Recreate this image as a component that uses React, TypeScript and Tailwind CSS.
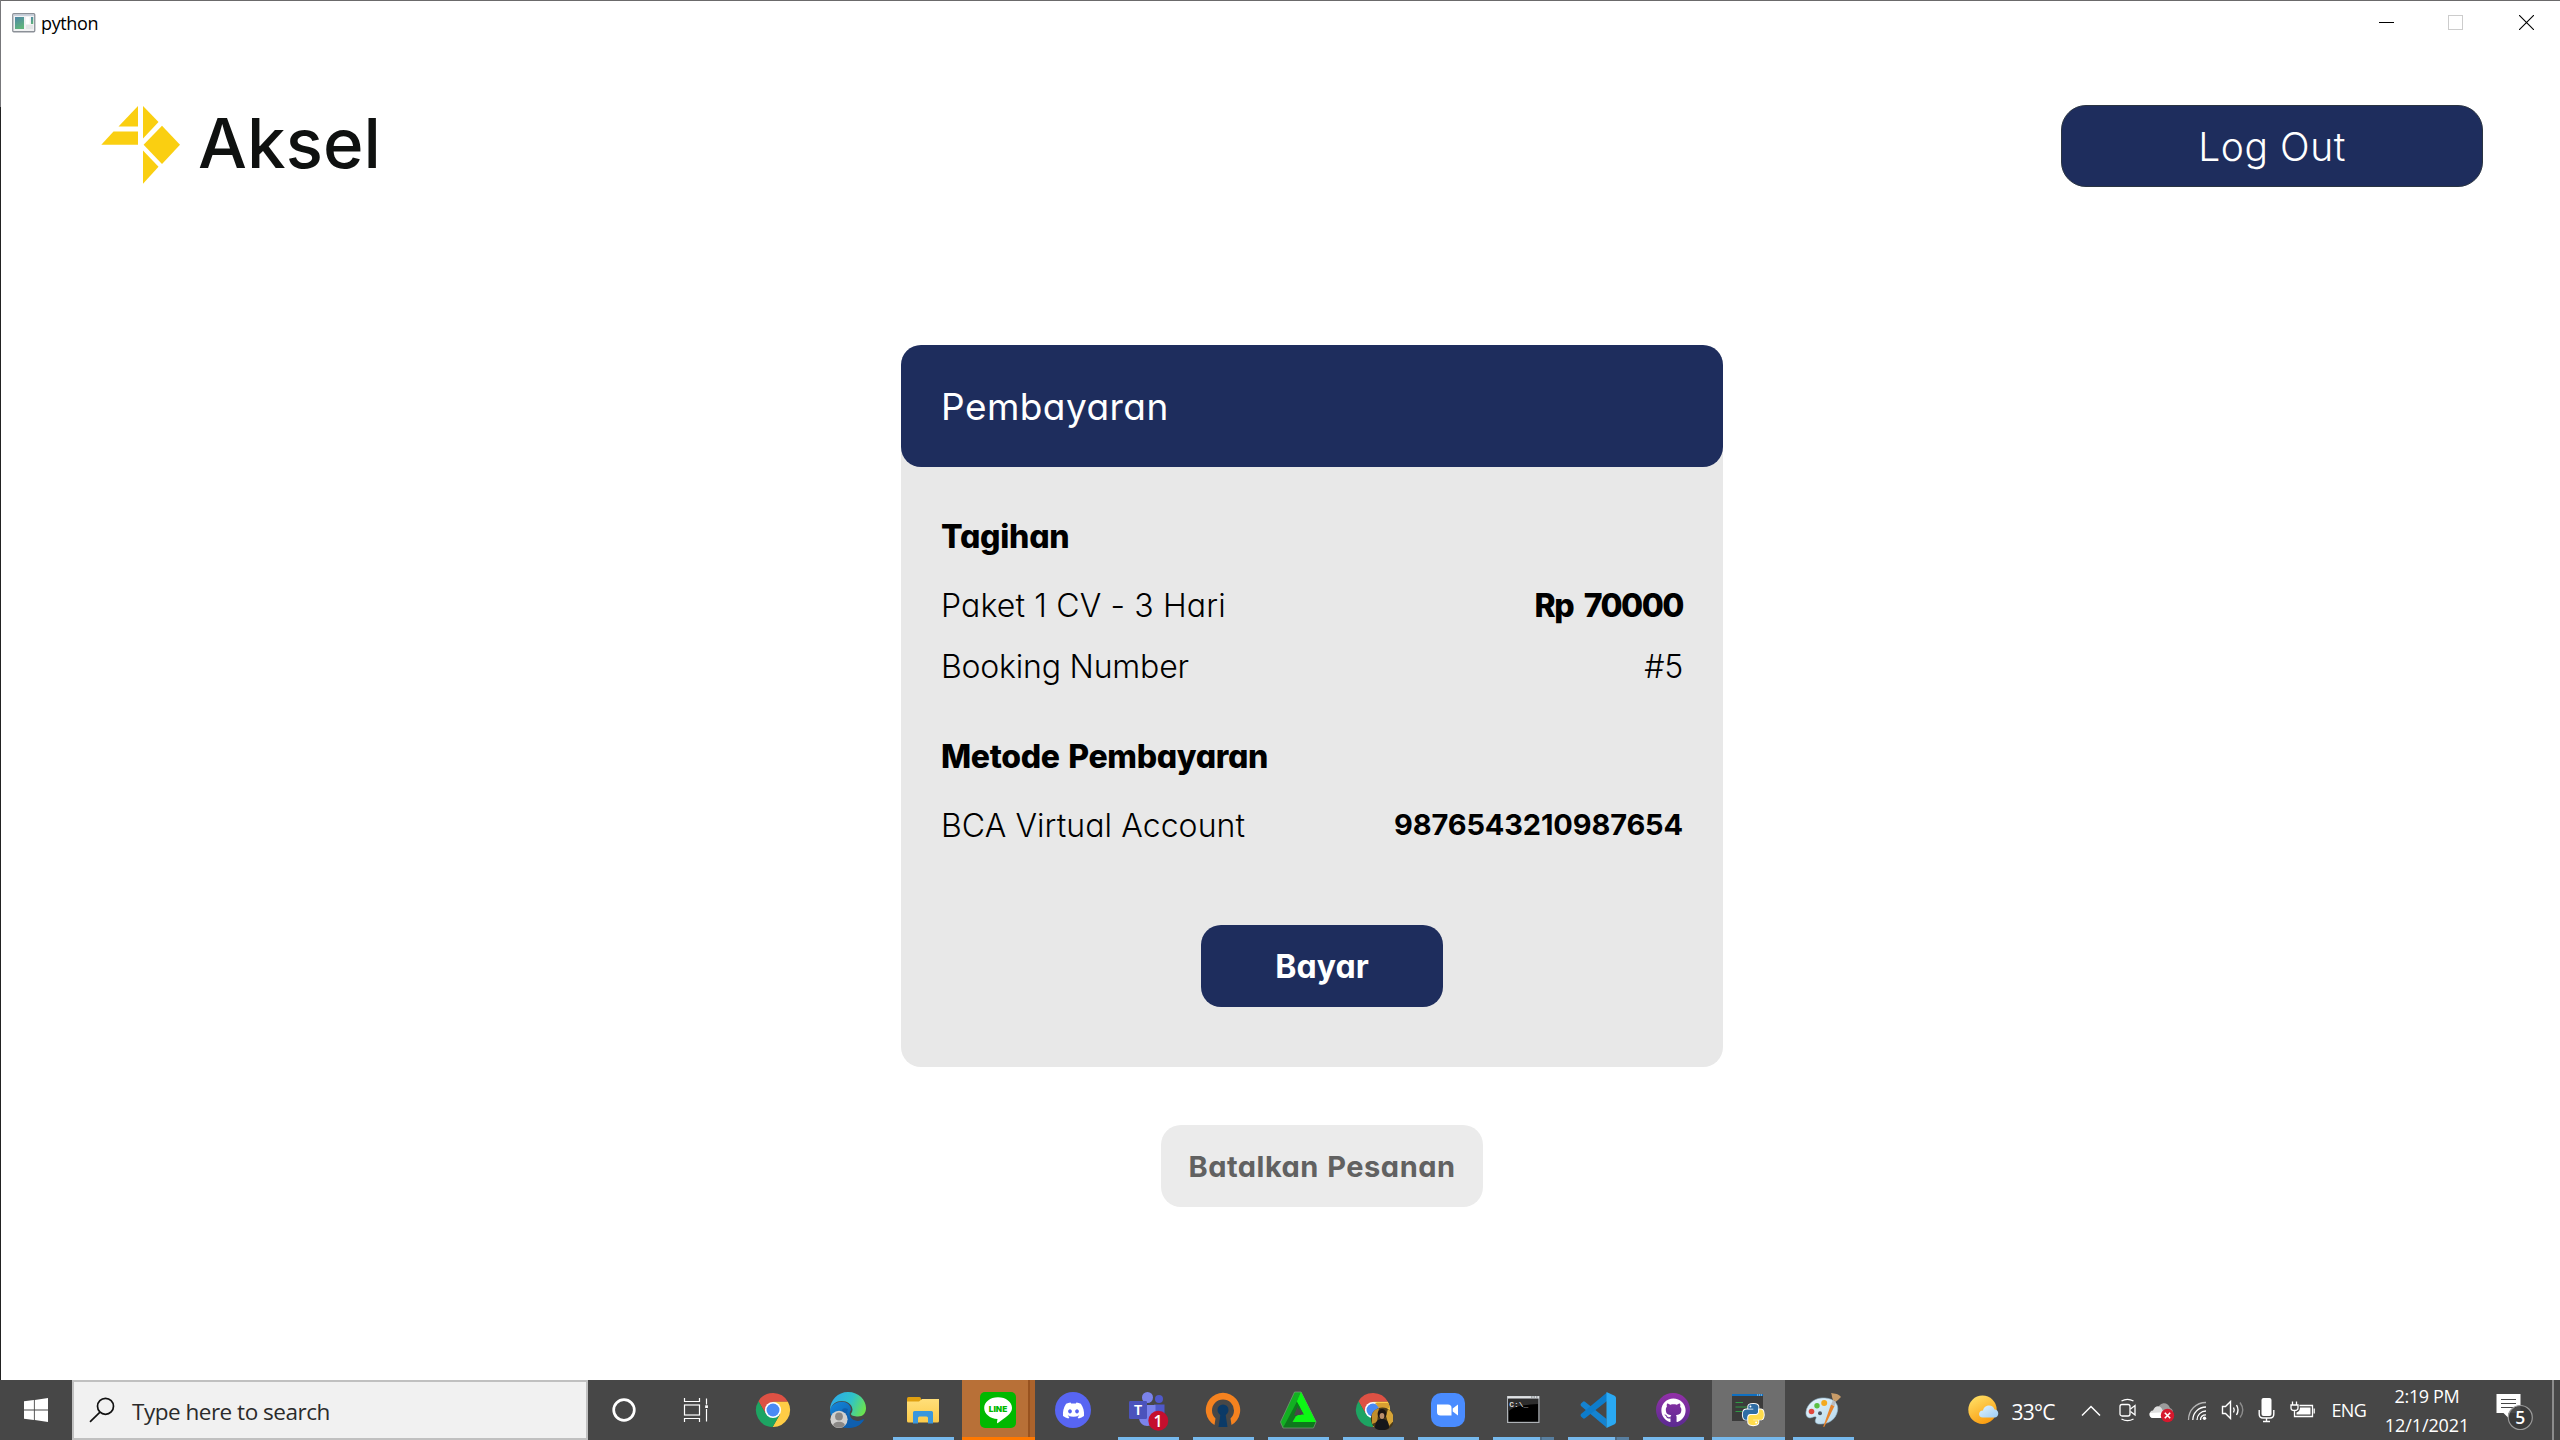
import type { ReactNode } from "react";
import { FaDiscord, FaGithub } from "react-icons/fa";

/* ---------- Window chrome and page ---------- */

function TitleBar() {
  return (
    <div className="flex h-[43px] items-center justify-between pl-[11px] pr-[26px]">
      <div className="flex items-center font-['Open_Sans',sans-serif] text-[18px] leading-[24px] tracking-[-0.36px] text-black">
        <svg width="24" height="20" viewBox="0 0 24 20" className="mr-[5px]">
          <defs>
            <linearGradient id="appPane" x1="0" y1="0" x2="0.4" y2="1">
              <stop offset="0" stopColor="#4f86a8" />
              <stop offset="1" stopColor="#5fb37c" />
            </linearGradient>
          </defs>
          <rect x="0.75" y="0.75" width="22" height="18" rx="1" fill="#f1f2f3" stroke="#8b9097" strokeWidth="1.3" />
          <rect x="1.5" y="1.4" width="20.5" height="1.6" fill="#c9d1dc" />
          <rect x="3" y="4" width="9" height="12" fill="url(#appPane)" />
          <rect x="14" y="4" width="3.5" height="7" fill="#ffffff" />
          <rect x="14" y="12" width="7" height="4" fill="#e3e5e6" />
          <rect x="19" y="4" width="2.2" height="7" fill="url(#appPane)" />
        </svg>
        <span className="pt-px">python</span>
      </div>
      <div className="flex items-center">
        <svg width="15" height="15" className="mr-[54px]">
          <path d="M0 7.5H15" stroke="#000" />
        </svg>
        <svg width="15" height="15" className="mr-[56px]">
          <rect x="0.5" y="0.5" width="14" height="14" fill="none" stroke="#cccccc" />
        </svg>
        <svg width="15" height="15">
          <path d="M0 0L15 15M15 0L0 15" stroke="#000" strokeWidth="1.1" />
        </svg>
      </div>
    </div>
  );
}

function Logo() {
  return (
    <div className="flex items-center">
      <svg width="80" height="80" viewBox="101 104.5 80 80" fill="#facf11">
        <path d="M138 105.5V126H118.5Z" />
        <path d="M113.5 131H138V144.2H101.3Z" />
        <path d="M143 105.5L158.5 121.5L143 138Z" />
        <path d="M162 125.2L180 144.3L162 163.5L143.6 144.3Z" />
        <path d="M143 150L158.5 166.3L143 183.3Z" />
      </svg>
      <span className="ml-[17px] pb-[4px] text-[69px] font-medium leading-[80px] tracking-[0.1px] text-[#0f1110]">Aksel</span>
    </div>
  );
}

function PaymentCard() {
  return (
    <section className="flex h-[722px] w-[822px] flex-col rounded-[20px] bg-[#e8e8e8] text-[32px] leading-[40px] text-black">
      <header className="flex h-[122px] shrink-0 items-center rounded-[20px] bg-[#1e2d5d] pl-[40px] pt-px text-[37px] tracking-[0.45px] text-white">
        Pembayaran
      </header>
      <div className="flex flex-col pl-[40px] pr-[40px] pt-[50px]">
        <h2 className="font-[800] tracking-[-0.25px]">Tagihan</h2>
        <div className="mt-[29px] flex justify-between">
          <span className="font-light tracking-[0.15px]">Paket 1 CV - 3 Hari</span>
          <span className="font-[800] tracking-[-1.5px] [word-spacing:5px]">Rp 70000</span>
        </div>
        <div className="mt-[21px] flex justify-between font-light tracking-[-0.2px]">
          <span>Booking Number</span>
          <span>#5</span>
        </div>
        <h2 className="mt-[50px] font-[800] tracking-[-0.35px] [word-spacing:2px]">Metode Pembayaran</h2>
        <div className="mt-[29px] flex justify-between">
          <span className="font-light tracking-[0.08px]">BCA Virtual Account</span>
          <span className="text-[29px] font-bold leading-[38px] tracking-[-0.14px]">9876543210987654</span>
        </div>
      </div>
      <button className="ml-[300px] mt-[79px] h-[82px] w-[242px] rounded-[20px] bg-[#1e2d5d] pt-[2px] font-bold tracking-[0.07px] text-white">
        Bayar
      </button>
    </section>
  );
}

/* ---------- Taskbar application icons (36 x 36 drawing area) ---------- */

function Icon({ children }: { children: ReactNode }) {
  return (
    <svg width="40" height="40" viewBox="-2 -2 40 40">
      {children}
    </svg>
  );
}

const chromeShape = (
  <>
    <path d="M3.45 9.2A17 17 0 0 1 32.9 9.8L18 9.8L10.9 22.1Z" fill="#dd5144" />
    <path d="M32.9 9.8A17 17 0 0 1 17.65 35L25.1 22.1L18 9.8Z" fill="#ffcd46" />
    <path d="M17.65 35A17 17 0 0 1 3.45 9.2L10.9 22.1L25.1 22.1Z" fill="#1da462" />
    <circle cx="18" cy="18" r="8.1" fill="#fff" />
    <circle cx="18" cy="18" r="6.5" fill="#4a8af4" />
  </>
);

const Chrome = () => <Icon>{chromeShape}</Icon>;

const ChromeProfile = () => (
  <Icon>
    {chromeShape}
    <path d="M20 11H34V16H24Z" fill="#d9a032" />
    <circle cx="27.5" cy="27" r="11.6" fill="#4a3a18" />
    <path d="M17 22A11.6 11.6 0 0 1 24 16L22 30L17 32Z" fill="#c08e2c" />
    <path d="M33 17A11.6 11.6 0 0 1 38.5 29L34 34L31 24Z" fill="#d6a437" />
    <path d="M20 36C20 29 23 27 27 27S34 29 34 36A11.6 11.6 0 0 1 20 36Z" fill="#15171a" />
    <ellipse cx="27" cy="22" rx="4.4" ry="5" fill="#1b1513" />
    <ellipse cx="27" cy="24" rx="2.4" ry="3" fill="#b98e6c" />
  </Icon>
);

const Edge = () => (
  <Icon>
    <defs>
      <linearGradient id="edgeTop" x1="0" y1="0.3" x2="1" y2="0.6">
        <stop offset="0" stopColor="#2da9ea" />
        <stop offset="0.55" stopColor="#2fc3c9" />
        <stop offset="1" stopColor="#6be24f" />
      </linearGradient>
      <linearGradient id="edgeLow" x1="0" y1="0" x2="1" y2="1">
        <stop offset="0" stopColor="#1387dc" />
        <stop offset="1" stopColor="#0c4f9b" />
      </linearGradient>
    </defs>
    <path d="M0 18C2 12 8 9 14 10C20 11 21 16 21 18C18 22 20 28 27 29C30 29.4 33 27 34 27.4C32 32 26 36 18 36C8 36 0 28 0 18Z" fill="url(#edgeLow)" />
    <path d="M11 21C10 29 16 35 24 35C29 34 32 31 34 27.4C31 29 27 29.5 23 28C18 26 16 22 18 17C14 15 11.5 17 11 21Z" fill="#0f5fae" />
    <path d="M0 18C0 8 8 0 18 0C29 0 36 8 36 16C36 21 33 24.500 28 24.500C24 24.500 21 23.500 21 22C21 21 22.500 20.500 22.500 17.500C22 12 17 9 12 9C6 9 2 12 0 18Z" fill="url(#edgeTop)" />
    <circle cx="9" cy="27.300" r="8.600" fill="#d1d0ce" />
    <circle cx="9" cy="24.500" r="3.900" fill="#8a8886" />
    <path d="M3.200 33.500C3.200 28.500 14.800 28.500 14.800 33.500A8.600 8.600 0 0 1 3.200 33.500Z" fill="#8a8886" />
  </Icon>
);

const Explorer = () => (
  <Icon>
    <defs>
      <linearGradient id="folder" x1="0" y1="0" x2="0" y2="1">
        <stop offset="0" stopColor="#ffdf7a" />
        <stop offset="1" stopColor="#fccb4a" />
      </linearGradient>
    </defs>
    <path d="M2 6.500Q2 5 3.500 5H14.500Q16 5 16 7V12H2Z" fill="#e0a010" />
    <path d="M2 9.500H14L17 7H34V29Q34 30.500 32.500 30.500H3.500Q2 30.500 2 29Z" fill="url(#folder)" />
    <path d="M8 20.500Q8 19 9.500 19H26.500Q28 19 28 20.500V31.500H23V26Q23 24.500 21.500 24.500H14.500Q13 24.500 13 26V31.500H8Z" fill="#3a97dd" />
  </Icon>
);

const Line = () => (
  <Icon>
    <rect width="36" height="36" rx="5" fill="#00b900" />
    <path d="M18 5.200C26 5.200 32 10 32 16C32 22 25 25.500 17.500 31.200C17 31.500 16.800 31 17.500 27C10 26.500 4.200 22 4.200 16C4.200 10 10 5.200 18 5.200Z" fill="#fff" />
    <text x="18" y="19.700" textAnchor="middle" fontSize="8" fontWeight="900" textLength="18.500" lengthAdjust="spacingAndGlyphs" fill="#00b900" fontFamily="Inter, sans-serif">LINE</text>
  </Icon>
);

const Discord = () => (
  <div className="flex h-[36px] w-[36px] items-center justify-center rounded-full bg-[#5865f2] text-white">
    <FaDiscord size={23} />
  </div>
);

const Teams = () => (
  <svg width="42" height="42" viewBox="-2 -3 42 42">
    <circle cx="30" cy="7" r="4" fill="#5059c9" />
    <path d="M25 12.500H35.500V21C35.500 26 31 29 26 27Z" fill="#5059c9" />
    <circle cx="18.500" cy="5.500" r="5.500" fill="#7b83eb" />
    <path d="M10 13H26.500V25C26.500 37 10 37 10 25Z" fill="#7b83eb" />
    <rect x="0" y="9" width="18" height="18" rx="1.200" fill="#4b53bc" />
    <text x="9" y="22.700" textAnchor="middle" fontSize="13" fontWeight="700" fill="#fff" fontFamily="Inter, sans-serif">T</text>
    <circle cx="29.300" cy="28.800" r="10" fill="#c50f2e" />
    <text x="29" y="34.500" textAnchor="middle" fontSize="16" fontWeight="600" fill="#fff" fontFamily="Open Sans, sans-serif">1</text>
  </svg>
);

const OpenVpn = () => (
  <Icon>
    <path d="M9.500 33A17.200 17.200 0 1 1 26.500 33L25.500 26.500A11 11 0 1 0 10.500 26.500Z" fill="#f5821f" />
    <circle cx="18" cy="18" r="5.500" fill="#0b3a67" />
    <path d="M15.800 20H20.200L22.500 35H13.500Z" fill="#0b3a67" />
  </Icon>
);

const GreenTriangle = () => (
  <Icon>
    <path d="M14.500 0H21L14 18L3 36L0.500 30Z" fill="#12b022" />
    <path d="M21 0L36 30H13L18 22.500H24L17 9.500Z" fill="#0cf814" />
    <path d="M17 9.500L20.500 15.500L12 30H36L33.500 36H3Z" fill="#0d7a1c" />
    <path d="M14.500 0H21L36 30L33.500 36H3L0.500 30Z" fill="none" stroke="#7b9b7b" strokeWidth="0.700" />
    <path d="M21 0L36 30H12.500L16 24H25L17 9.500Z" fill="#0cf814" />
    <path d="M17.500 15L21.500 23H14Z" fill="#474747" />
  </Icon>
);

const Zoom = () => (
  <Icon>
    <rect x="1" y="1" width="34" height="34" rx="10" fill="#4a8cff" />
    <path d="M7 12.500H18Q21.500 12.500 21.500 16V23.500H10.500Q7 23.500 7 20Z" fill="#fff" />
    <path d="M22.700 16.500L28 12.500V23.500L22.700 19.600Z" fill="#fff" />
  </Icon>
);

const Terminal = () => (
  <Icon>
    <rect x="2" y="4" width="32.500" height="27" fill="#aeb2b6" />
    <rect x="3.300" y="6.800" width="30" height="23" fill="#000" />
    <path d="M3.300 20C6 16 14 13 33 12V6.800H3.300Z" fill="#2d2d2d" />
    <rect x="2.500" y="4.200" width="31.500" height="2" fill="#dfe2e4" />
    <path d="M26 5H33" stroke="#6d7276" strokeWidth="1.200" strokeDasharray="1.500 1" />
    <text x="4.300" y="14.500" fontSize="8" fontWeight="700" fill="#d8d8d8" fontFamily="Liberation Mono, monospace" textLength="19" lengthAdjust="spacingAndGlyphs">C:\_</text>
  </Icon>
);

const VsCode = () => (
  <Icon>
    <path d="M1 11.500L3 9.700Q4 9 5 9.800L26.500 27V35.500L1 14Q0 12.800 1 11.500Z" fill="#1583d0" />
    <path d="M1 24.500L3 26.300Q4 27 5 26.200L27 9V0.500L1 22Q0 23.200 1 24.500Z" fill="#0d7ccb" />
    <path d="M26.500 0L34.600 3.700Q36 4.500 36 6V30Q36 31.500 34.600 32.300L26.500 36Z" fill="#2aa9f3" />
  </Icon>
);

const GithubDesktop = () => (
  <div className="flex h-[34px] w-[34px] items-center justify-center rounded-full bg-linear-to-b from-[#9330a8] to-[#5a2a91] text-white">
    <FaGithub size={25} />
  </div>
);

const Python = () => (
  <Icon>
    <rect x="2" y="2" width="31" height="27" fill="#3b3b3b" />
    <rect x="2" y="2" width="31" height="2" fill="#0f6fc0" />
    <path d="M27 3H32" stroke="#b9dbf5" strokeDasharray="1.200 0.800" />
    <path d="M5.500 10.500H13M5.500 15H17M5.500 19.500H12" stroke="#2f9a45" strokeWidth="1.200" />
    <g transform="translate(10.200 11.600) scale(0.205)" stroke="#fff" strokeWidth="9" strokeLinejoin="round" paintOrder="stroke">
      <path d="M63.391 1.988c-4.222.02-8.252.379-11.8 1.007-10.450 1.846-12.346 5.710-12.346 12.837v9.411h24.693v3.137H29.977c-7.176 0-13.460 4.313-15.426 12.521-2.268 9.405-2.368 15.275 0 25.096 1.755 7.311 5.947 12.519 13.124 12.519h8.491V67.234c0-8.151 7.051-15.340 15.426-15.340h24.665c6.866 0 12.346-5.654 12.346-12.548V15.833c0-6.693-5.646-11.720-12.346-12.837-4.244-.706-8.645-1.027-12.866-1.008z" fill="#2f6da4" />
      <path d="M91.682 28.380v10.966c0 8.500-7.208 15.655-15.426 15.655H51.591c-6.756 0-12.346 5.783-12.346 12.549v23.515c0 6.691 5.818 10.628 12.346 12.547 7.816 2.297 15.312 2.713 24.665 0 6.216-1.801 12.346-5.423 12.346-12.547v-9.412H63.938v-3.138h37.012c7.176 0 9.852-5.005 12.348-12.519 2.578-7.735 2.467-15.174 0-25.096-1.774-7.145-5.161-12.521-12.348-12.521h-9.268z" fill="#ffdc4c" />
      <circle cx="50" cy="14.300" r="4.700" fill="#fff" stroke="none" />
      <circle cx="77.800" cy="92.600" r="4.700" fill="#fff" stroke="none" />
    </g>
  </Icon>
);

const Paint = () => (
  <Icon>
    <defs>
      <linearGradient id="palette" x1="0" y1="0" x2="1" y2="1">
        <stop offset="0" stopColor="#e8f4fb" />
        <stop offset="1" stopColor="#b5d8ec" />
      </linearGradient>
    </defs>
    <path d="M1 20C2 11 11 5 20 6C29 6.500 34 12 32.500 19C31 27 24 32 16 32C10 32.500 9.500 29 11 26.500C12 24.500 10 24 7 25.500C3 27 0.500 24 1 20Z" fill="url(#palette)" stroke="#8fb6cc" strokeWidth="0.600" />
    <circle cx="6.500" cy="19.500" r="2.800" fill="#e0463c" />
    <circle cx="12" cy="13.700" r="2.700" fill="#5bbf43" />
    <circle cx="19.200" cy="11" r="3" fill="#f4a91f" />
    <circle cx="15" cy="21.300" r="2" fill="#4a5560" />
    <path d="M26 12.500L29.500 14L19.500 34.500Q18.500 35.500 18.300 34.500Z" fill="#e8842b" />
    <path d="M26 12.500L28 8L31 9.500L29.500 14Z" fill="#b9bcc0" />
    <path d="M28 8C26.500 4 27 2.500 26 1C30 1.500 34 2 36 5C34 7 33 8 31 9.500Z" fill="#c79b68" />
  </Icon>
);

/* ---------- Taskbar ---------- */

type Mark = "none" | "open" | "grouped" | "alert" | "active";

function TaskButton({ icon, mark }: { icon: ReactNode; mark: Mark }) {
  const fill = mark === "alert" ? "bg-[#b87037]" : mark === "active" ? "bg-[#6e6e6e]" : "";
  return (
    <div className="flex h-[60px] w-[75px]">
      <div className={`relative flex w-[73px] flex-col items-center ${fill}`}>
        {mark === "alert" && <div className="absolute right-0 top-0 h-full w-[7px] border-l-2 border-[#98521f] bg-[#ab632c]" />}
        <div className="flex h-[57px] items-center pr-px pt-[3px]">
          <div className="relative">{icon}</div>
        </div>
        {mark === "open" && <div className="h-[3px] w-[61px] bg-[#76b9ed]" />}
        {mark === "grouped" && (
          <div className="flex h-[3px] w-[61px] bg-[#587fa0]">
            <div className="w-[47px] bg-[#76b9ed]" />
            <div className="w-[2px] bg-[#4e6a82]" />
          </div>
        )}
        {mark === "alert" && <div className="relative h-[3px] w-full bg-[#ff7800]" />}
        {mark === "active" && <div className="h-[3px] w-full bg-[#76b9ed]" />}
      </div>
    </div>
  );
}

const apps: { name: string; icon: ReactNode; mark: Mark }[] = [
  { name: "chrome", icon: <Chrome />, mark: "none" },
  { name: "edge", icon: <Edge />, mark: "none" },
  { name: "explorer", icon: <Explorer />, mark: "open" },
  { name: "line", icon: <Line />, mark: "alert" },
  { name: "discord", icon: <Discord />, mark: "none" },
  { name: "teams", icon: <Teams />, mark: "open" },
  { name: "vpn", icon: <OpenVpn />, mark: "open" },
  { name: "triangle", icon: <GreenTriangle />, mark: "open" },
  { name: "chrome-profile", icon: <ChromeProfile />, mark: "open" },
  { name: "zoom", icon: <Zoom />, mark: "open" },
  { name: "terminal", icon: <Terminal />, mark: "grouped" },
  { name: "vscode", icon: <VsCode />, mark: "grouped" },
  { name: "github", icon: <GithubDesktop />, mark: "open" },
  { name: "python", icon: <Python />, mark: "active" },
  { name: "paint", icon: <Paint />, mark: "open" },
];

function Tray() {
  return (
    <div className="flex h-full items-center text-white">
      <svg width="32" height="30" viewBox="0 0 32 30">
        <defs>
          <linearGradient id="sun" x1="0.2" y1="0" x2="0.7" y2="1">
            <stop offset="0" stopColor="#ffe066" />
            <stop offset="1" stopColor="#fb9a0c" />
          </linearGradient>
          <linearGradient id="cloud" x1="0" y1="0" x2="1" y2="1">
            <stop offset="0" stopColor="#e2f4ff" />
            <stop offset="1" stopColor="#9dcdf4" />
          </linearGradient>
        </defs>
        <circle cx="14.500" cy="14.700" r="14.200" fill="url(#sun)" />
        <path d="M15 22.500C9.500 22.500 10 15.500 15 15.500C16 9.500 25 8.500 26.500 14.500C31.500 14.500 31.500 22.500 26.500 22.500Z" fill="url(#cloud)" />
      </svg>
      <span className="ml-[12px] mt-[4px] text-[21px] leading-[28px] tracking-[-0.8px]">33°C</span>
      <svg width="20" height="12" viewBox="0 0 20 12" className="ml-[26px] mt-px" fill="none" stroke="#fff" strokeWidth="1.500">
        <path d="M1 10.500L10 1.500L19 10.500" />
      </svg>
      <svg width="18" height="24" viewBox="0 0 18 24" className="ml-[18px]" fill="none" stroke="#fff" strokeWidth="1.300">
        <path d="M2.500 3C6 1 11 1 14.500 3M2.500 21C6 23 11 23 14.500 21" />
        <rect x="1" y="6.500" width="10" height="11.500" rx="2" />
        <path d="M11.500 11L16 7.500V17L11.500 13.500" />
      </svg>
      <svg width="26" height="22" viewBox="0 0 26 22" className="ml-[12px] mt-[3px]">
        <path d="M9 8C10 1 19 0 21 7C25 8 25 15 21 15H9Z" fill="#9b9b9b" />
        <path d="M4 17C-0.500 17 -0.500 9.500 4 9.500C6 3.500 12 4 13.500 9L20 13V17Z" fill="#dedede" />
        <path d="M4 17C1 17 0 14 0.800 12L20 11V17Z" fill="#fff" />
        <circle cx="18.500" cy="14.500" r="6.700" fill="#d6182d" />
        <path d="M15.800 11.800L21.200 17.200M21.200 11.800L15.800 17.200" stroke="#fff" strokeWidth="1.600" />
      </svg>
      <svg width="22" height="20" viewBox="0 0 22 20" className="ml-[12px] mt-[2px]" fill="none" stroke="#fff" strokeWidth="1.300">
        <path d="M1.500 19C1.500 9 9 1.500 19 1.500" stroke="#b5b5b5" />
        <path d="M5.800 19C5.800 12 11.500 6 19 6M10 19C10 14 14 10 19 10" />
        <path d="M13.500 19C13.500 16 15.500 13.800 19 13.800" />
        <circle cx="17.500" cy="17.300" r="1.700" fill="#fff" stroke="none" />
      </svg>
      <svg width="25" height="20" viewBox="0 0 25 20" className="ml-[12px]" fill="none" stroke="#fff" strokeWidth="1.400">
        <path d="M1.500 6.500H4.500L9.500 1.500V18.500L4.500 13.500H1.500Z" />
        <path d="M12.500 7.500Q14 10 12.500 12.500M15.500 5Q18.500 10 15.500 15" />
        <path d="M19 2.500Q24.500 10 19 17.500" stroke="#8d8d8d" />
      </svg>
      <svg width="17" height="26" viewBox="0 0 17 26" className="ml-[12px]" fill="none" stroke="#fff" strokeWidth="1.400">
        <rect x="3.500" y="1" width="10" height="18" rx="2" fill="#fff" stroke="none" />
        <path d="M1.200 13V17Q1.200 21 5 21H12Q15.800 21 15.800 17V13M8.500 21V24.500M5 24.500H12" />
      </svg>
      <svg width="26" height="18" viewBox="0 0 26 18" className="ml-[15px]" fill="none" stroke="#fff" strokeWidth="1.300">
        <path d="M2.500 0.500V4M6.500 0.500V4M1 4H8V7Q8 9.500 4.500 9.500Q1 9.500 1 7ZM4.500 9.500V15.500H22.500V4.500H9.500" />
        <path d="M10 6.500H20.500V13.500H6.500V11.500Q10 10.500 10 6.500Z" fill="#fff" stroke="none" />
        <path d="M24.200 7.500V12.500" />
      </svg>
      <span className="ml-[16px] text-[18px] leading-[24px] tracking-[-0.75px]">ENG</span>
      <div className="ml-[19px] mt-[2px] flex w-[84px] flex-col items-center text-[18px] leading-[29px]">
        <span className="tracking-[-0.35px]">2:19 PM</span>
        <span className="tracking-[-0.1px]">12/1/2021</span>
      </div>
      <svg width="38" height="40" viewBox="0 0 38 40" className="ml-[27px] mt-[4px]">
        <path d="M0.500 2H24.500V21H12.500V26L7.500 21H0.500Z" fill="#fff" />
        <path d="M5 7.500H20M5 11.500H20M5 15.500H20" stroke="#474747" strokeWidth="1.200" />
        <circle cx="24.300" cy="25.500" r="12" fill="#3a3a3a" fillOpacity="0.920" stroke="#9a9a9a" strokeWidth="1.200" />
        <text x="24.200" y="32" textAnchor="middle" fontSize="17.500" fontWeight="600" fill="#fff" fontFamily="Open Sans, sans-serif">5</text>
      </svg>
      <div className="ml-[18px] mr-[6px] h-full w-[2px] bg-[#8c8c8c]" />
    </div>
  );
}

function Taskbar() {
  return (
    <footer className="flex h-[60px] items-center justify-between bg-[#474747] font-['Open_Sans',sans-serif]">
      <div className="flex h-full items-center">
        <div className="flex w-[72px] justify-center">
          <svg width="24" height="24" viewBox="0 0 24 24" fill="#fff">
            <path d="M0 3.300L9.900 2V11.400H0ZM10.800 1.900L24 0V11.400H10.800ZM0 12.400H9.900V22L0 20.700ZM10.800 12.400H24V24L10.800 22.100Z" />
          </svg>
        </div>
        <div className="flex h-full w-[516px] items-center border-2 border-[#c0c0c0] bg-[#f1f1f1] pl-[15px]">
          <svg width="26" height="26" viewBox="0 0 26 26" fill="none" stroke="#111" strokeWidth="1.700">
            <circle cx="16.500" cy="9.300" r="8" />
            <path d="M11 15.200L1 24.800" />
          </svg>
          <span className="ml-[17px] mt-[3px] text-[22.5px] leading-[30px] tracking-[-0.49px] text-[#2b2b2b]">Type here to search</span>
        </div>
        <div className="flex w-[72px] justify-center">
          <svg width="24" height="24" viewBox="0 0 24 24">
            <circle cx="12" cy="12" r="10.300" fill="none" stroke="#fff" strokeWidth="2.700" />
          </svg>
        </div>
        <div className="mr-[5px] flex w-[72px] justify-center">
          <svg width="26" height="24" viewBox="0 0 26 24" fill="none" stroke="#fff" strokeWidth="1.200">
            <path d="M1.500 0V3.500H16.500V0M1.500 24V20.500H16.500V24" />
            <rect x="1.500" y="7" width="15" height="10" />
            <path d="M23.500 0.500V6.500M23.500 11V23.500" />
            <rect x="22.200" y="7.300" width="2.700" height="2.700" fill="#fff" stroke="none" />
          </svg>
        </div>
        {apps.map((a) => (
          <TaskButton key={a.name} icon={a.icon} mark={a.mark} />
        ))}
      </div>
      <Tray />
    </footer>
  );
}

export default function App() {
  return (
    <div className="flex h-[1440px] w-[2560px] flex-col overflow-hidden bg-white font-['Inter',sans-serif] [font-feature-settings:'cv11']">
      <div className="flex flex-1">
        <div className="flex w-px flex-col">
          <div className="h-[107px] bg-[#77777a]" />
          <div className="flex-1 bg-[#222222]" />
        </div>
        <div className="flex flex-1 flex-col border-t border-[#6b6a6b]">
          <TitleBar />
          <div className="flex items-start justify-between pl-[100px] pr-[77px] pt-[59px]">
            <Logo />
            <button className="mt-[2px] h-[82px] w-[422px] rounded-[25px] border-[1.5px] border-[#2a3442] bg-[#1e2d5d] pt-[2px] text-[39px] font-light leading-[48px] tracking-[0.56px] text-white">
              Log Out
            </button>
          </div>
          <main className="ml-[900px] mt-[158px] flex w-[842px] flex-col">
            <PaymentCard />
            <button className="ml-[260px] mt-[58px] h-[82px] w-[322px] rounded-[20px] bg-[#ebebeb] pt-px text-[29px] font-bold leading-[40px] tracking-[0.5px] text-[#616161] [word-spacing:1px]">
              Batalkan Pesanan
            </button>
          </main>
        </div>
      </div>
      <Taskbar />
    </div>
  );
}
